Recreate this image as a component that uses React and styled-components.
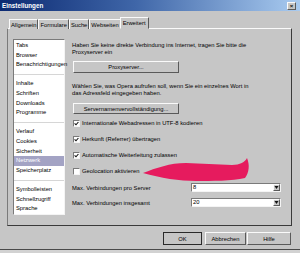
import React from "react";
import styled, { createGlobalStyle, css } from "styled-components";

const GlobalStyle = createGlobalStyle`
  html, body {
    margin: 0;
    padding: 0;
    background: #d2d2d2;
  }
  body {
    font-family: "Liberation Sans", Arial, sans-serif;
    font-size: 5.8px;
    color: #000;
  }
`;

const raised = css`
  border-top: 1px solid #fafafa;
  border-left: 1px solid #fafafa;
  border-right: 1px solid #5a5a5a;
  border-bottom: 1px solid #5a5a5a;
`;

const sunken = css`
  border-top: 1px solid #7a7a7a;
  border-left: 1px solid #7a7a7a;
  border-right: 1px solid #f4f4f4;
  border-bottom: 1px solid #f4f4f4;
`;

const Window = styled.div`
  position: relative;
  width: 300px;
  height: 250px;
  background: #c6c6c6;
  border-bottom: 1px solid #4a4a4a;
  display: flex;
  flex-direction: column;
  box-sizing: border-box;
  overflow: hidden;
`;

const TitleBar = styled.div`
  height: 11px;
  display: flex;
  align-items: center;
  justify-content: space-between;
  padding: 0 4px 0 2px;
  background: linear-gradient(to right, #0c2a72 0%, #3f66a8 45%, #a9cbf0 100%);
  color: #fff;
  font-weight: bold;
  font-size: 6.3px;
`;

const CloseBtn = styled.div`
  width: 7px;
  height: 6px;
  background: #c6c6c6;
  ${raised};
  color: #111;
  font-size: 6px;
  line-height: 6px;
  text-align: center;
  font-weight: bold;
`;

const TabRow = styled.div`
  display: flex;
  align-items: flex-end;
  height: 12px;
  margin-top: 6px;
  padding-left: 9px;
  position: relative;
  z-index: 1;
`;

const Tab = styled.div`
  height: ${(p) => (p.$active ? "12px" : "10px")};
  padding: 0 ${(p) => (p.$active ? "2px" : "1px")};
  margin: 0 ${(p) => (p.$active ? "-1px" : "0")};
  display: flex;
  align-items: center;
  background: #c6c6c6;
  border-top: 1px solid #fafafa;
  border-left: 1px solid #fafafa;
  border-right: 1px solid #5a5a5a;
  border-bottom: ${(p) => (p.$active ? "1px solid #c6c6c6" : "none")};
  box-sizing: border-box;
  white-space: nowrap;
`;

const Panel = styled.div`
  margin: -1px 8px 0 7px;
  height: 198px;
  box-sizing: border-box;
  border-top: 1px solid #fafafa;
  border-left: 1px solid #7a7a7a;
  border-right: 1px solid #3a3a3a;
  border-bottom: 1px solid #3a3a3a;
  padding: 10px 0 0 5px;
  display: flex;
  gap: 7px;
`;

const SideList = styled.div`
  width: 52px;
  height: 176px;
  background: #fff;
  ${sunken};
  box-sizing: border-box;
  padding-top: 1px;
  display: flex;
  flex-direction: column;
`;

const SideItem = styled.div`
  height: 9.7px;
  line-height: 9.7px;
  padding-left: 2px;
  white-space: nowrap;
  background: ${(p) => (p.$selected ? "#a3a3c4" : "transparent")};
  color: ${(p) => (p.$selected ? "#fff" : "#000")};
`;

const SideSep = styled.div`
  height: 9.3px;
  display: flex;
  align-items: center;
  &::after {
    content: "";
    flex: 1;
    height: 1px;
    background: #d6d6d6;
  }
`;

const Content = styled.div`
  flex: 1;
  display: flex;
  flex-direction: column;
  padding-top: 3px;
  padding-right: 10px;
`;

const Para = styled.p`
  margin: ${(p) => p.$mt || 0}px 0 0 0;
  line-height: 7px;
`;

const Button = styled.div`
  width: ${(p) => p.$w}px;
  height: ${(p) => p.$h}px;
  margin: ${(p) => p.$mt || 0}px 0 0 ${(p) => p.$ml ?? 1}px;
  background: #c6c6c6;
  ${raised};
  box-sizing: border-box;
  display: flex;
  align-items: center;
  justify-content: center;
  white-space: nowrap;
  ${(p) =>
    p.$default &&
    css`
      outline: 1px solid #2a2a2a;
      outline-offset: -1px;
    `}
`;

const CheckList = styled.div`
  margin-top: 1px;
  display: flex;
  flex-direction: column;
`;

const CheckRow = styled.div`
  height: 16px;
  display: flex;
  align-items: center;
  gap: 2px;
  padding-left: 1px;
`;

const Box = styled.div`
  width: 7px;
  height: 7px;
  background: #fff;
  ${sunken};
  box-sizing: border-box;
  display: flex;
  align-items: center;
  justify-content: center;
`;

const FieldRow = styled.div`
  display: flex;
  align-items: center;
  justify-content: space-between;
  height: 9px;
  margin-top: ${(p) => p.$mt}px;
`;

const Select = styled.div`
  width: 90px;
  height: 9px;
  background: #fff;
  ${sunken};
  box-sizing: border-box;
  display: flex;
  align-items: stretch;
  justify-content: space-between;
  padding-left: 1px;
  line-height: 7px;
`;

const SelectBtn = styled.div`
  width: 7px;
  background: #c6c6c6;
  ${raised};
  box-sizing: border-box;
  display: flex;
  align-items: center;
  justify-content: center;
`;

const Footer = styled.div`
  display: flex;
  justify-content: flex-end;
  gap: 1px;
  margin: 6px 9px 0 0;
`;

const Arrow = styled.svg`
  position: absolute;
  left: 140px;
  top: 156px;
  width: 112px;
  height: 28px;
`;

const Check = () => (
  <svg width="5" height="5" viewBox="0 0 5 5">
    <path d="M0.6 2.4 L2 3.8 L4.4 1" stroke="#111" strokeWidth="1.1" fill="none" />
  </svg>
);

const Tri = () => (
  <svg width="5" height="3" viewBox="0 0 5 3">
    <path d="M0.5 0 L4.5 0 L2.5 3 Z" fill="#111" />
  </svg>
);

const groups = [
  ["Tabs", "Browser", "Benachrichtigungen"],
  ["Inhalte", "Schriften", "Downloads", "Programme"],
  ["Verlauf", "Cookies", "Sicherheit", "Netzwerk", "Speicherplatz"],
  ["Symbolleisten", "Schnellzugriff", "Sprache"],
];

const checks = [
  ["Internationale Webadressen in UTF-8 kodieren", true],
  ["Herkunft (Referrer) übertragen", true],
  ["Automatische Weiterleitung zulassen", true],
  ["Geolocation aktivieren", false],
];

export default function App() {
  return (
    <>
      <GlobalStyle />
      <Window>
        <TitleBar>
          <span>Einstellungen</span>
          <CloseBtn>×</CloseBtn>
        </TitleBar>
        <TabRow>
          {["Allgemein", "Formulare", "Suche", "Webseiten", "Erweitert"].map((t) => (
            <Tab key={t} $active={t === "Erweitert"}>
              {t}
            </Tab>
          ))}
        </TabRow>
        <Panel>
          <SideList>
            {groups.map((g, gi) => (
              <React.Fragment key={gi}>
                {gi > 0 && <SideSep />}
                {g.map((item) => (
                  <SideItem key={item} $selected={item === "Netzwerk"}>
                    {item}
                  </SideItem>
                ))}
              </React.Fragment>
            ))}
          </SideList>
          <Content>
            <Para>
              Haben Sie keine direkte Verbindung ins Internet, tragen Sie bitte die
              <br />
              Proxyserver ein
            </Para>
            <Button $w={106} $h={12} $mt={5}>
              Proxyserver...
            </Button>
            <Para $mt={10}>
              Wählen Sie, was Opera aufrufen soll, wenn Sie ein einzelnes Wort in
              <br />
              das Adressfeld eingegeben haben.
            </Para>
            <Button $w={106} $h={11} $mt={6}>
              Servernamenvervollständigung...
            </Button>
            <CheckList>
              {checks.map(([label, on]) => (
                <CheckRow key={label}>
                  <Box>{on && <Check />}</Box>
                  <span>{label}</span>
                </CheckRow>
              ))}
            </CheckList>
            <FieldRow $mt={4}>
              <span>Max. Verbindungen pro Server</span>
              <Select>
                <span>8</span>
                <SelectBtn>
                  <Tri />
                </SelectBtn>
              </Select>
            </FieldRow>
            <FieldRow $mt={6}>
              <span>Max. Verbindungen insgesamt</span>
              <Select>
                <span>20</span>
                <SelectBtn>
                  <Tri />
                </SelectBtn>
              </Select>
            </FieldRow>
          </Content>
        </Panel>
        <Footer>
          <Button $w={39} $h={13} $ml={0} $default>
            OK
          </Button>
          <Button $w={41} $h={13} $ml={2}>
            Abbrechen
          </Button>
          <Button $w={44} $h={13} $ml={0}>
            Hilfe
          </Button>
        </Footer>
        <Arrow viewBox="0 0 112 28">
          <path
            d="M3 17 C16 12 30 7 46 7 L92 9 C100 9 105 6 107 2 C110 9 109 17 105 22 C92 25 72 25 56 25 C40 25 20 22 3 17 Z"
            fill="#e61b5e"
          />
        </Arrow>
      </Window>
    </>
  );
}
